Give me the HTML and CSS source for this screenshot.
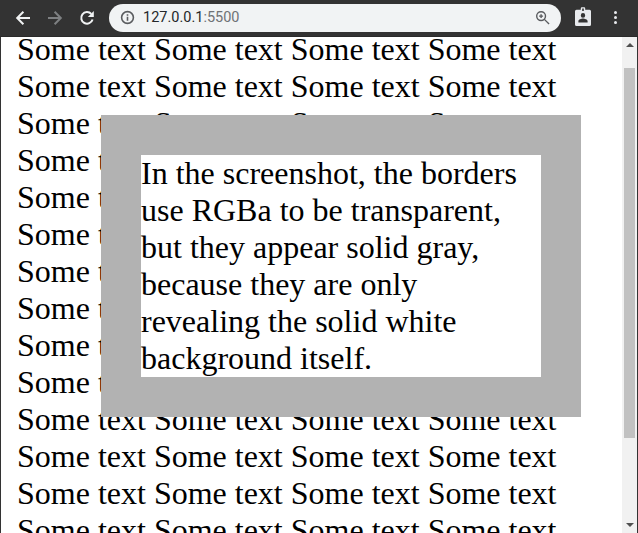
FILE: index.html
```html
<!DOCTYPE html>
<html lang="en">
<head>
    <meta charset="UTF-8" />
    <title>Transparent borders</title>
    <link rel="stylesheet" href="styles.css">
</head>
<body>
    <div class="toolbar">
        <svg class="nav-icon" viewBox="0 0 16 16"><path d="M15 8H2.5M8.4 1.8 2.2 8 8.4 14.2" /></svg>
        <svg class="nav-icon nav-off" viewBox="0 0 16 16"><path d="M1 8h12.5M7.6 1.8 13.8 8 7.6 14.2" /></svg>
        <svg class="nav-icon" viewBox="0 0 16 16"><path d="M13.6 9.5A5.8 5.8 0 1 1 12.3 3.9" /><path class="fill" d="M14.8 .9v6H8.8z" /></svg>
        <div class="omnibox">
            <svg class="info-icon" viewBox="0 0 16 16"><circle cx="8" cy="8" r="6.3" /><path d="M8 7.2v4.2M8 4.4v1.6" /></svg>
            <span class="url">127.0.0.1<span class="url-port">:5500</span></span>
            <svg class="zoom-icon" viewBox="0 0 16 16"><circle cx="6.5" cy="6.5" r="4.7" /><path d="M10 10l5 5M4.4 6.5h4.2M6.5 4.4v4.2" /></svg>
        </div>
        <svg class="badge-icon" viewBox="0 0 16 18" preserveAspectRatio="none"><path fill-rule="evenodd" d="M1.5 2.5H5.8V1.3Q5.8 .3 6.8 .3H9.2Q10.2 .3 10.2 1.3V2.5H14.5Q16 2.5 16 4V16.5Q16 18 14.5 18H1.5Q0 18 0 16.5V4Q0 2.5 1.5 2.5ZM7.2 1.4V3.8H8.8V1.4ZM8 5.8A2.2 2.2 0 1 0 8 10.2 2.2 2.2 0 1 0 8 5.8ZM3.4 14.8H12.6V13.6C12.6 11.9 9.6 11 8 11S3.4 11.9 3.4 13.6Z" /></svg>
        <div class="menu-dots"><i></i><i></i><i></i></div>
    </div>

    <div class="viewport">
        <div class="page">
            <p class="page-text">Some text Some text Some text Some text Some text Some text Some text Some text Some text Some text Some text Some text Some text Some text Some text Some text Some text Some text Some text Some text Some text Some text Some text Some text Some text Some text Some text Some text Some text Some text Some text Some text Some text Some text Some text Some text Some text Some text Some text Some text Some text Some text Some text Some text Some text Some text Some text Some text Some text Some text Some text Some text Some text Some text Some text Some text</p>
            <div class="dialog">In the screenshot, the borders use RGBa to be transparent, but they appear solid gray, because they are only revealing the solid white background itself.</div>
        </div>
        <div class="scrollbar">
            <div class="arrow arrow-up"></div>
            <div class="track"><div class="thumb"></div></div>
            <div class="arrow arrow-down"></div>
        </div>
    </div>
</body>
</html>
```

FILE: styles.css
```css
html, body {
    margin: 0;
    height: 100%;
}

body {
    display: flex;
    flex-direction: column;
    height: 533px;
    overflow: hidden;
    background-color: #333;
    font-family: "Liberation Serif", serif;
}

.toolbar {
    display: flex;
    align-items: center;
    flex: none;
    height: 37px;
    box-sizing: border-box;
    padding: 4px 0 5px 15px;
    background-color: #333;
    border-bottom: 1px solid #2a2a2a;
}

.nav-icon {
    flex: none;
    width: 16px;
    height: 16px;
    margin-right: 16px;
    fill: none;
    stroke: #f1f3f4;
    stroke-width: 2;
}

.nav-icon .fill {
    fill: #f1f3f4;
    stroke: none;
}

.nav-off {
    stroke: #7e8082;
}

.omnibox {
    display: flex;
    align-items: center;
    width: 452px;
    height: 28px;
    margin-left: -2px;
    border-radius: 14px;
    background-color: #f1f3f4;
    font-family: Roboto, sans-serif;
    font-size: 14.5px;
}

.info-icon {
    width: 15px;
    height: 15px;
    margin-left: 11px;
    fill: none;
    stroke: #5a5c5f;
    stroke-width: 1.7;
}

.url {
    margin-left: 8px;
    color: #24272a;
    flex: 1;
}

.url-port {
    color: #6f7276;
}

.zoom-icon {
    width: 15px;
    height: 15px;
    margin-right: 11px;
    fill: none;
    stroke: #5a5c5f;
    stroke-width: 1.5;
}

.badge-icon {
    flex: none;
    width: 16px;
    height: 19px;
    margin-left: 14px;
    margin-bottom: 3px;
    fill: #e8eaed;
}

.menu-dots {
    display: flex;
    flex-direction: column;
    gap: 2px;
    margin-left: 23px;
    margin-bottom: 1px;
}

.menu-dots i {
    width: 3px;
    height: 3px;
    border-radius: 50%;
    background-color: #e8eaed;
}

.viewport {
    display: flex;
    flex: 1;
    min-height: 0;
    border-left: 1px solid #333;
    border-right: 1px solid #333;
}

.page {
    position: relative;
    flex: 1;
    min-width: 0;
    overflow: hidden;
    background-color: #fff;
}

.page-text {
    margin: -6px 0 0;
    padding: 0 16px;
    font-size: 32px;
    color: #000;
}

.dialog {
    position: absolute;
    left: 100px;
    top: 78px;
    width: 400px;
    border: 40px solid #b2b2b2;
    background-color: #fff;
    font-size: 32px;
    color: #000;
}

.scrollbar {
    display: flex;
    flex-direction: column;
    flex: none;
    width: 15px;
    background-color: #f1f1f1;
}

.arrow {
    flex: none;
    box-sizing: border-box;
    border-left: 4px solid transparent;
    border-right: 4px solid transparent;
    width: 0;
    height: 0;
    margin: 6px auto;
}

.arrow-up {
    border-bottom: 4px solid #505050;
}

.arrow-down {
    border-top: 4px solid #505050;
}

.track {
    flex: 1;
    padding: 15px 2px 0;
}

.thumb {
    height: 370px;
    background-color: #c1c1c1;
}
```
